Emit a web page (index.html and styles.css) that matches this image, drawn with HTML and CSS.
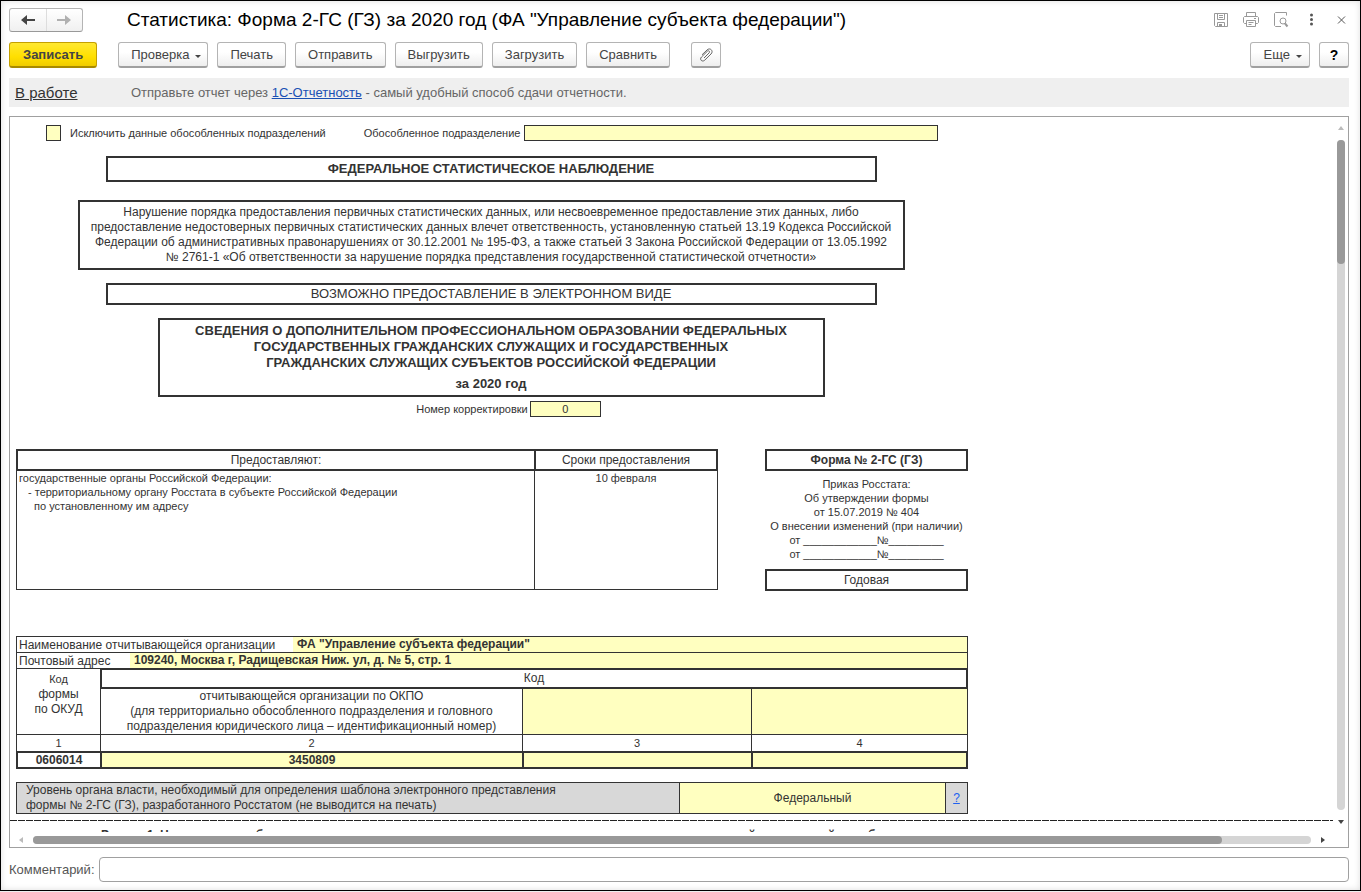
FILE: index.html
```html
<!DOCTYPE html>
<html lang="ru">
<head>
<meta charset="utf-8">
<title>Статистика: Форма 2-ГС (ГЗ) за 2020 год</title>
<link rel="stylesheet" href="styles.css">
</head>
<body>
<div class="window">
  <header class="titlebar">
    <div class="nav">
      <button class="nav-btn" type="button" aria-label="Назад"><svg width="16" height="12" viewBox="0 0 16 12"><path d="M1 6 7 1v4h8v2H7v4z" fill="#444"/></svg></button>
      <button class="nav-btn" type="button" aria-label="Вперед"><svg width="16" height="12" viewBox="0 0 16 12"><path d="M15 6 9 1v4H1v2h8v4z" fill="#b0b0b0"/></svg></button>
    </div>
    <h1 class="title">Статистика: Форма 2-ГС (ГЗ) за 2020 год (ФА "Управление субъекта федерации")</h1>
    <div class="tools">
      <button class="tool" type="button" aria-label="Сохранить"><svg width="16" height="16" viewBox="0 0 16 16" fill="none" stroke="#999"><path d="M1.500 1.500h13v13h-12l-1-1v-12zM4.500 1.500v6h7v-6M6 3.500h4M6 5.500h4M4.500 14.500v-4h7v4"/><path d="M6 12h3v2H6z" fill="#999" stroke="none"/></svg></button>
      <button class="tool" type="button" aria-label="Печать"><svg width="16" height="16" viewBox="0 0 16 16" fill="none" stroke="#999"><path d="M3.500 4.500v-4h9v4M3.500 11.500h-2l-1-1v-5l1-1h13l1 1v5l-1 1h-2M3.500 8.500h9v6h-9zM5.500 10.500h5M5.500 12.500h3M11 6.500h2"/></svg></button>
      <button class="tool" type="button" aria-label="Предварительный просмотр"><svg width="16" height="16" viewBox="0 0 16 16" fill="none" stroke="#999"><path d="M8 14.500H2.500l-1-1v-12l1-1h11v3"/><circle cx="10" cy="9" r="3"/><path d="M12 11.500l2.500 3" stroke-width="2"/></svg></button>
      <button class="tool" type="button" aria-label="Еще действия"><svg width="16" height="16" viewBox="0 0 16 16" fill="#555"><circle cx="8.500" cy="3" r="1.500"/><circle cx="8.500" cy="7.500" r="1.500"/><circle cx="8.500" cy="12" r="1.500"/></svg></button>
      <button class="tool" type="button" aria-label="Закрыть"><svg width="16" height="16" viewBox="0 0 16 16" fill="none" stroke="#555"><path d="M5 4.500l7 7M12 4.500l-7 7"/></svg></button>
    </div>
  </header>

  <div class="commands">
    <button class="btn primary" type="button">Записать</button>
    <button class="btn spaced" type="button">Проверка<span class="caret"></span></button>
    <button class="btn" type="button">Печать</button>
    <button class="btn" type="button">Отправить</button>
    <button class="btn" type="button">Выгрузить</button>
    <button class="btn" type="button">Загрузить</button>
    <button class="btn" type="button">Сравнить</button>
    <button class="btn square spaced" type="button" aria-label="Прикрепить файл"><svg width="16" height="16" viewBox="0 0 16 16" fill="none" stroke="#666"><path d="M6 11l5-5c1.500-1.500-.3-3-1.700-1.700L3.500 10c-2.500 2.500.8 5.500 3.200 3.200l6.300-6.200c3-3-1-7-4-4L4 7.800"/></svg></button>
    <button class="btn more" type="button">Еще<span class="caret"></span></button>
    <button class="btn square help" type="button">?</button>
  </div>

  <div class="status">
    <a class="state" href="#state">В работе</a>
    <p class="promo">Отправьте отчет через <a class="service" href="#service">1С-Отчетность</a> - самый удобный способ сдачи отчетности.</p>
  </div>

  <main class="frame">
    <div class="viewport">
      <div class="sheet">
        <div class="filters">
          <input class="check" type="checkbox" id="exclude"><label class="check-label" for="exclude">Исключить данные обособленных подразделений</label>
          <label for="division">Обособленное подразделение</label><input class="cell-input division" type="text" id="division">
        </div>
        <div class="intro">
          <div class="box wide observation">ФЕДЕРАЛЬНОЕ СТАТИСТИЧЕСКОЕ НАБЛЮДЕНИЕ</div>
          <p class="box notice">Нарушение порядка предоставления первичных статистических данных, или несвоевременное предоставление этих данных, либо<br>предоставление недостоверных первичных статистических данных влечет ответственность, установленную статьей 13.19 Кодекса Российской<br>Федерации об административных правонарушениях от 30.12.2001 № 195-ФЗ, а также статьей 3 Закона Российской Федерации от 13.05.1992<br>№ 2761-1 «Об ответственности за нарушение порядка представления государственной статистической отчетности»</p>
          <div class="box wide electronic">ВОЗМОЖНО ПРЕДОСТАВЛЕНИЕ В ЭЛЕКТРОННОМ ВИДЕ</div>
          <h2 class="box heading">СВЕДЕНИЯ О ДОПОЛНИТЕЛЬНОМ ПРОФЕССИОНАЛЬНОМ ОБРАЗОВАНИИ ФЕДЕРАЛЬНЫХ<br>ГОСУДАРСТВЕННЫХ ГРАЖДАНСКИХ СЛУЖАЩИХ И ГОСУДАРСТВЕННЫХ<br>ГРАЖДАНСКИХ СЛУЖАЩИХ СУБЪЕКТОВ РОССИЙСКОЙ ФЕДЕРАЦИИ<span class="period">за 2020 год</span></h2>
        </div>
        <div class="correction"><label for="correction">Номер корректировки</label><input class="cell-input number" type="text" id="correction" value="0"></div>

        <div class="terms">
          <table class="grid deadlines">
            <colgroup><col class="w-who"><col></colgroup>
            <thead><tr><th>Предоставляют:</th><th>Сроки предоставления</th></tr></thead>
            <tbody><tr>
              <td>государственные органы Российской Федерации:<div class="indent">- территориальному органу Росстата в субъекте Российской Федерации</div><div class="indent deeper">по установленному им адресу</div></td>
              <td class="center">10 февраля</td>
            </tr></tbody>
          </table>
          <aside class="order">
            <div class="box form-name">Форма № 2-ГС (ГЗ)</div>
            <p class="order-text">Приказ Росстата:<br>Об утверждении формы<br>от 15.07.2019 № 404<br>О внесении изменений (при наличии)<br>от ____________№_________<br>от ____________№_________</p>
            <div class="box">Годовая</div>
          </aside>
        </div>

        <div class="org">
          <div class="org-row"><label class="org-label" for="org">Наименование отчитывающейся организации</label><input class="org-value" type="text" id="org" value="ФА &quot;Управление субъекта федерации&quot;"></div>
          <div class="org-row"><label class="org-label short" for="address">Почтовый адрес</label><input class="org-value" type="text" id="address" value="109240, Москва г, Радищевская Ниж. ул, д. № 5, стр. 1"></div>
        </div>
        <table class="grid codes">
          <colgroup><col class="w-okud"><col class="w-okpo"><col class="w-third"><col></colgroup>
          <tbody>
            <tr class="r-code"><td rowspan="2" class="okud"><small>Код</small><br>формы<br>по ОКУД</td><td colspan="3" class="thick">Код</td></tr>
            <tr class="r-names"><td>отчитывающейся организации по ОКПО<br>(для территориально обособленного подразделения и головного<br>подразделения юридического лица – идентификационный номер)</td><td class="fill"></td><td class="fill"></td></tr>
            <tr class="r-index"><td>1</td><td>2</td><td>3</td><td>4</td></tr>
            <tr class="r-values"><td class="thick">0606014</td><td class="thick fill">3450809</td><td class="thick fill"></td><td class="thick fill"></td></tr>
          </tbody>
        </table>

        <div class="level">
          <label class="level-text" for="level">Уровень органа власти, необходимый для определения шаблона электронного представления<br>формы № 2-ГС (ГЗ), разработанного Росстатом (не выводится на печать)</label>
          <select class="level-value" id="level"><option>Федеральный</option></select>
          <a class="level-help" href="#level-help">?</a>
        </div>
      </div>
      <div class="page-break"></div>
      <h3 class="section">Раздел 1. Численность работников, замещавших государственные должности и должности государственной гражданской службы</h3>
    </div>
    <div class="scroll vertical"><svg class="arrow" width="6" height="4" viewBox="0 0 6 4"><path d="M3 0 6 4H0z" fill="#bbb"/></svg><div class="track"><div class="thumb"></div></div><svg class="arrow" width="6" height="4" viewBox="0 0 6 4"><path d="M0 0h6L3 4z" fill="#444"/></svg></div>
    <div class="scroll horizontal"><svg class="arrow" width="4" height="6" viewBox="0 0 4 6"><path d="M4 0v6L0 3z" fill="#bbb"/></svg><div class="track"><div class="thumb"></div></div><svg class="arrow" width="4" height="6" viewBox="0 0 4 6"><path d="M0 0v6l4-3z" fill="#444"/></svg></div>
  </main>

  <div class="comment"><label for="comment">Комментарий:</label><input class="comment-input" type="text" id="comment"></div>
</div>
</body>
</html>
```
FILE: styles.css
```css
* { box-sizing: border-box; }
body {
  margin: 0;
  height: 100vh;
  padding-bottom: 1px;
  background: #eee;
  color: #333;
  font: 13px/16px "Liberation Sans", Arial, sans-serif;
}
button, input, select { font: inherit; color: inherit; margin: 0; }
h1, h2, h3, p { margin: 0; font-weight: normal; }
.window {
  height: 100%;
  display: flex;
  flex-direction: column;
  padding: 7px 11px 8px 8px;
  border: 1px solid #000;
  background: #fff;
  box-shadow: inset 0 0 6px #ddd;
}

.titlebar { display: flex; align-items: center; height: 24px; }
.nav { display: flex; width: 74px; height: 24px; border: 1px solid #b4b4b4; border-bottom-color: #999; border-radius: 3px; background: linear-gradient(#fff, #f0f0f0); }
.nav-btn { flex: 1; display: flex; align-items: center; justify-content: center; padding: 0; border: 0; background: none; }
.nav-btn + .nav-btn { border-left: 1px solid #ddd; }
.title { flex: 1; margin-left: 44px; font-size: 19px; line-height: 26px; color: #000; white-space: nowrap; }
.tools { display: flex; gap: 14px; }
.tool { display: flex; padding: 0; border: 0; background: none; }

.commands { display: flex; gap: 9px; margin-top: 10px; }
.btn { display: flex; align-items: center; justify-content: center; height: 26px; padding: 1px 12px 0; border: 1px solid #b4b4b4; border-bottom: 2px solid #a0a0a0; border-radius: 3px; background: linear-gradient(#fff 40%, #eee); color: #444; white-space: nowrap; }
.primary { padding: 1px 13px 0; border-color: #c4a000; border-bottom-color: #a88a00; background: linear-gradient(#ffe830, #ffdf00 60%, #f0cc00); font-weight: bold; }
.spaced { margin-left: 12px; }
.square { width: 30px; padding: 0; }
.more { margin-left: auto; padding: 1px 13px 0; }
.help { color: #000; font-weight: bold; font-size: 14px; }
.caret { margin: 2px -6px 0 6px; border: 3px solid transparent; border-top-color: #444; border-bottom: 0; }

.status { display: flex; align-items: center; height: 29px; margin-top: 10px; padding-left: 6px; background: #efefef; }
.state { width: 116px; font-size: 15px; color: #333; }
.promo { padding-top: 1px; color: #666; }
.service { color: #1a50b4; }

.frame { flex: 1; min-height: 0; margin-top: 9px; display: grid; grid-template: minmax(0, 1fr) 15px / minmax(0, 1fr) 15px; border: 1px solid #a0a0a0; background: #fff; }
.viewport { overflow: hidden; }
.sheet { max-width: 958px; padding: 8px 0 0 6px; font-size: 12px; line-height: 15px; }

.filters { display: flex; align-items: center; height: 16px; padding-left: 30px; font-size: 11px; }
.check { appearance: none; width: 15px; height: 16px; border: 1px solid #333; background: #ffffc0; }
.check-label { margin: 0 38px 0 9px; }
.cell-input { height: 16px; padding: 0; border: 1px solid #333; border-radius: 0; background: #ffffc0; }
.division { flex: 1; margin: 0 30px 0 4px; }
.intro { padding-right: 2px; }
.box { border: 2px solid #333; text-align: center; line-height: 18px; }
.wide { max-width: 771px; margin: 15px auto 0; font-size: 13px; }
.observation { font-weight: bold; line-height: 22px; }
.notice { max-width: 827px; margin: 18px auto 13px; padding: 3px 0; line-height: 15px; }
.electronic { margin-top: 0; }
.heading { max-width: 667px; margin: 13px auto 0; padding: 3px 0; font-size: 13px; font-weight: bold; line-height: 16px; }
.period { display: block; margin-top: 5px; }
.correction { display: flex; justify-content: center; align-items: center; margin-top: 4px; padding-left: 33px; font-size: 11px; }
.number { width: 71px; margin-left: 2px; text-align: center; }

.terms { display: flex; align-items: flex-start; justify-content: space-between; margin-top: 32px; }
/* Each cell draws its top and left rule, so thick and thin rules share an edge. */
.grid { border-collapse: separate; border-spacing: 0; table-layout: fixed; }
.grid th, .grid td { border: 0 solid #333; border-width: 1px 0 0 1px; font-weight: normal; }
.grid th:last-child, .grid td:last-child { border-right-width: 1px; }
.deadlines { width: 702px; height: 141px; }
.w-who { width: 518px; }
.deadlines th { height: 22px; padding: 0; border-width: 2px 0 2px 2px; }
.deadlines th:last-child { border-right-width: 2px; }
.deadlines td { padding: 0 2px; border-top-width: 0; border-bottom-width: 1px; vertical-align: top; font-size: 11px; line-height: 14px; }
.indent { padding-left: 9px; }
.deeper { padding-left: 15px; }
.center { text-align: center; }
.order { width: 203px; }
.form-name { font-weight: bold; }
.order-text { padding: 6px 0 8px; text-align: center; font-size: 11px; line-height: 14px; white-space: nowrap; }

.org { margin-top: 45px; border: 0 solid #333; border-width: 0 1px 0 1px; }
.org-row { display: flex; height: 16px; border-top: 1px solid #333; }
.org-label { width: 276px; padding-left: 2px; line-height: 16px; white-space: nowrap; }
.short { width: 113px; }
.org-value { flex: 1; min-width: 0; height: 15px; padding: 0 4px; border: 0; background: #ffffc0; font-weight: bold; }
.codes { width: 100%; text-align: center; }
.codes td { padding: 0; }
.codes .r-code .thick { border-width: 2px; }
.codes .r-names td:not(.okud) { border-top-width: 0; }
.w-okud { width: 84px; }
.w-okpo { width: 422px; }
.w-third { width: 229px; }
.r-code { height: 21px; }
.r-names { height: 45px; }
.r-index { height: 17px; font-size: 11px; }
.r-values { height: 18px; }
.codes .r-values td { border-width: 2px 0 2px 2px; font-weight: bold; line-height: 14px; }
.codes .r-values td:last-child { border-right-width: 2px; }
.codes .okud { vertical-align: top; padding-top: 3px; }
.okud small { font-size: 11px; }
.codes .fill { background: #ffffc0; }

.level { display: flex; height: 32px; margin: 13px 0 0; border: 1px solid #333; background: #d8d8d8; }
.level-text { flex: 1; padding-left: 9px; white-space: nowrap; }
.level-value { appearance: none; width: 267px; padding: 0; border: solid #333; border-width: 0 1px; border-radius: 0; background: #ffffc0; text-align: center; text-align-last: center; }
.level-help { width: 21px; text-align: center; line-height: 30px; color: #2060f0; }
.page-break { height: 1px; margin-top: 6px; background: repeating-linear-gradient(90deg, #222 0 7px, #fff 7px 8px); }
.section { margin: 7px 0 0 91px; font-size: 12px; line-height: 15px; font-weight: bold; white-space: nowrap; }

.scroll { display: flex; align-items: center; }
.track { flex: 1; border-radius: 4px; background: #d5d5d5; }
.thumb { border-radius: 4px; background: #999; }
.vertical { flex-direction: column; padding: 9px 0 8px; }
.vertical .track { width: 8px; margin: 10px 0; }
.vertical .thumb { height: 18%; min-height: 124px; }
.horizontal { padding: 0 8px 0 9px; }
.horizontal .track { height: 8px; margin: 0 10px; }
.horizontal .thumb { width: 93%; height: 8px; }

.comment { display: flex; align-items: center; gap: 4px; margin-top: 9px; color: #555; }
.comment-input { flex: 1; height: 25px; border: 1px solid #a0a0a0; border-radius: 4px; background: #fff; }
```
